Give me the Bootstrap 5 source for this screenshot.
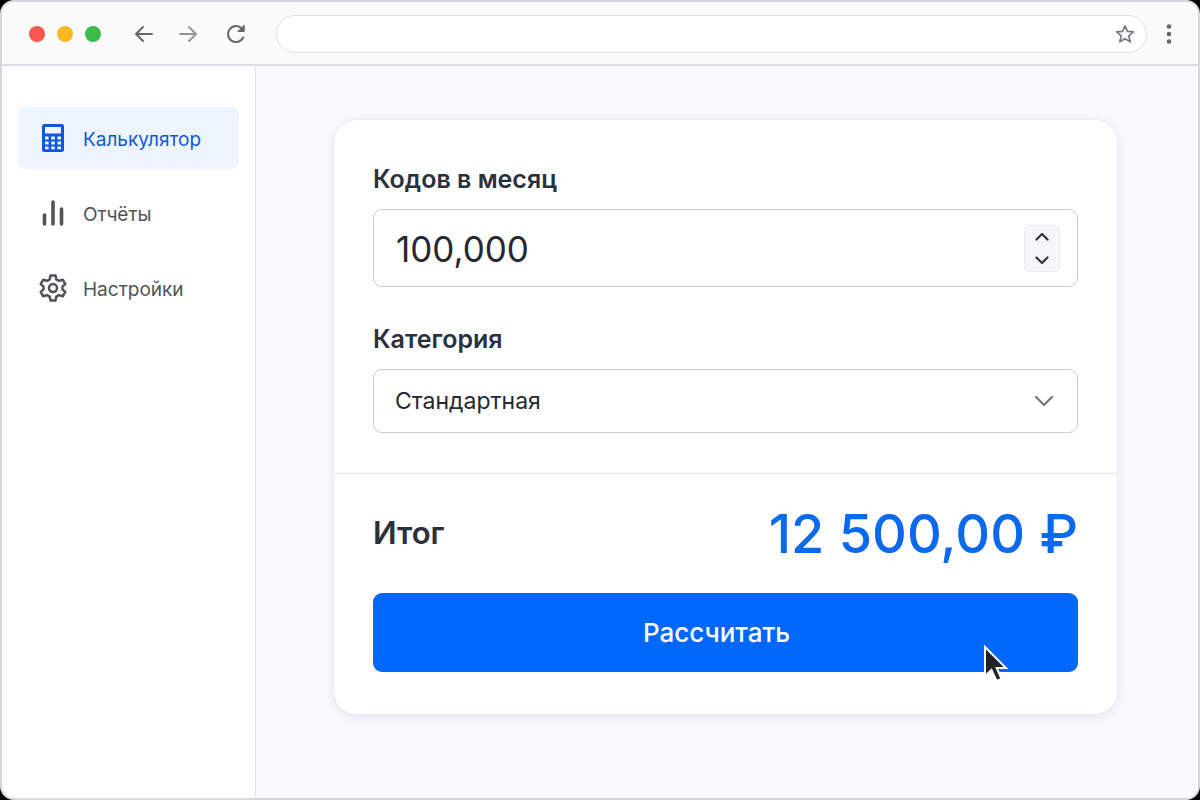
<!DOCTYPE html>
<html lang="ru">
<head>
<meta charset="utf-8">
<meta name="viewport" content="width=device-width, initial-scale=1">
<title>Калькулятор</title>
<link href="https://cdn.jsdelivr.net/npm/bootstrap@5.3.0/dist/css/bootstrap.min.css" rel="stylesheet">
<style>
  :root { --ink: #2b313c; --blue: #0067fd; }
  body { background: #000; color: var(--ink); font-family: Inter, "Open Sans", sans-serif; }
  .window { border: 2px solid #d6d8dd; border-radius: 14px; background: #fefefe; }
  .toolbar { height: 64px; background: #fafafb; border-bottom: 2px solid #dcdee4; padding: 2px 23px 0 27px; }
  .lights { gap: 12px; margin-right: 33px; }
  .light { width: 16px; height: 16px; border-radius: 50%; }
  .tools { gap: 24px; margin-right: 30px; }
  .tool { border: 0; background: none; padding: 0; line-height: 0; color: #66676c; }
  .tool.faded { color: #949599; }
  .address { border: 1px solid #e1e2e5; border-radius: 19px; height: 38px; background: #fff; padding-right: 11px; }
  .address input { border: 0; outline: 0; background: none; min-width: 0; padding: 0 16px; }
  .side { width: 254px; padding: 41px 16px; border-right: 1px solid #dfe1e8; gap: 13px; }
  .side .nav-link { height: 62px; padding: 4px 21px 0; gap: 16px; border-radius: 8px; font-size: 19px; color: #50535a; }
  .side .nav-link.active { background: #edf4fe; color: #1158d8; }
  .side svg { margin-bottom: 4px; }
  .stage { background: #f7f9fe; padding: 53px 80px 54px 77px; }
  .panel { background: #fefefe; border: 1px solid #eceef3; border-radius: 24px; box-shadow: 0 2px 10px rgba(40, 50, 80, .09); }
  .fields { padding: 41px 39px 40px; border-bottom: 1px solid #dfe2e8; }
  .result { padding: 0 39px 42px; }
  .caption { font-size: 25px; line-height: 36px; margin-bottom: 12px; font-weight: 600; display: block; }
  .field { border: 1px solid #c9cdd8; border-radius: 9px; background: #fefefe; }
  .amount { height: 78px; padding: 0 17px 0 22px; margin-bottom: 34px; }
  .amount input { border: 0; outline: 0; background: none; padding: 2px 0 0; min-width: 0; font-size: 35px; color: #25282f; }
  .stepper { width: 36px; height: 47px; padding: 6px 0; background: #f4f6f9; border: 1px solid #e9ebef; border-radius: 5px; }
  .stepper button { border: 0; background: none; padding: 0; line-height: 0; color: #33363e; }
  .choice { height: 64px; padding: 0 21px; font-size: 23px; line-height: 32px; color: #25282f; appearance: none; }
  .choice-mark { position: absolute; right: 24px; top: 26px; pointer-events: none; }
  .sum { height: 119px; }
  .sum-label { font-size: 31px; font-weight: 600; }
  .sum-value { font-size: 54px; font-weight: 500; color: #0b69ee; white-space: nowrap; }
  .go { height: 79px; padding: 0 18px 0 0; border: 0; border-radius: 9px; background: var(--blue); color: #fff; font-size: 26px; font-weight: 500; }
  .go:hover { background: var(--blue); color: #fff; }
  .pointer { position: absolute; right: 69px; bottom: -12px; pointer-events: none; }
</style>
</head>
<body>
<div class="window d-flex flex-column min-vh-100 overflow-hidden">
  <header class="toolbar d-flex align-items-center flex-shrink-0">
    <div class="lights d-flex">
      <span class="light" style="background:#fb5650"></span>
      <span class="light" style="background:#fbb724"></span>
      <span class="light" style="background:#3cbb4b"></span>
    </div>
    <div class="tools d-flex align-items-center">
      <button class="tool" type="button" aria-label="Назад"><svg width="20" height="20" viewBox="0 0 20 20" fill="none" stroke="currentColor" stroke-width="2" stroke-linecap="round" stroke-linejoin="round"><path d="M18 10H2M9 3l-7 7 7 7"/></svg></button>
      <button class="tool faded" type="button" aria-label="Вперёд"><svg width="20" height="20" viewBox="0 0 20 20" fill="none" stroke="currentColor" stroke-width="2" stroke-linecap="round" stroke-linejoin="round"><path d="M2 10h16M11 3l7 7-7 7"/></svg></button>
      <button class="tool ms-1" type="button" aria-label="Обновить"><svg width="20" height="20" viewBox="0 0 20 20" fill="none" stroke="currentColor" stroke-width="2" stroke-linecap="round"><path d="M17.300 13.500A8 8 0 1 1 16 4.700"/><path d="M18.200 1.500v6h-6z" fill="currentColor" stroke-width="1" stroke-linejoin="round"/></svg></button>
    </div>
    <div class="address d-flex align-items-center flex-grow-1">
      <input class="flex-grow-1" type="text" aria-label="Адрес">
      <button class="tool" type="button" aria-label="В избранное"><svg width="20" height="20" viewBox="0 0 20 20" fill="none" stroke="#77787d" stroke-width="1.700" stroke-linejoin="round"><path d="M10 1.800l2.400 5.600 6 .5-4.600 4 1.400 5.900-5.200-3.100-5.200 3.100 1.400-5.900-4.600-4 6-.5z"/></svg></button>
    </div>
    <button class="tool ms-3" type="button" aria-label="Меню"><svg width="12" height="22" viewBox="0 0 12 22" fill="currentColor"><circle cx="6" cy="3.500" r="2.300"/><circle cx="6" cy="11" r="2.300"/><circle cx="6" cy="18.500" r="2.300"/></svg></button>
  </header>
  <div class="d-flex flex-grow-1">
    <nav class="side nav flex-column flex-nowrap flex-shrink-0">
      <a class="nav-link active d-flex align-items-center" href="#"><svg width="28" height="30" viewBox="0 0 28 30"><rect x="3" y="1" width="22" height="28" rx="2.500" fill="#1158d8"/><path fill="#edf4fe" d="M6 4h16v6.500H6zM6 13.500h3.600v3H6zm6.200 0h3.600v3h-3.600zm6.200 0H22v3h-3.600zM6 18.500h3.600v3H6zm6.200 0h3.600v3h-3.600zm6.200 0H22v3h-3.600zM6 23.500h3.600v2.800H6zm6.200 0h3.600v2.800h-3.600zm6.200 0H22v2.800h-3.600z"/></svg>Калькулятор</a>
      <a class="nav-link d-flex align-items-center" href="#"><svg width="28" height="30" viewBox="0 0 28 30" stroke="currentColor" stroke-width="3.600" stroke-linecap="round"><path d="M5.500 17v9M14 4v22M22.500 11v15"/></svg>Отчёты</a>
      <a class="nav-link d-flex align-items-center" href="#"><svg width="28" height="30" viewBox="0 0 28 30" fill="none" stroke="currentColor" stroke-width="2.500" stroke-linejoin="round"><path d="M11.500 2.500h5l.8 3.900 2.700 1.500 3.700-1.200 2.600 4.400-2.900 2.500v2.800l2.900 2.500-2.600 4.400-3.700-1.200-2.700 1.500-.8 3.900h-5l-.8-3.900L8 22.100l-3.700 1.200-2.600-4.400 2.900-2.500v-2.800l-2.900-2.500 2.600-4.400L8 7.900l2.700-1.500z"/><circle cx="14" cy="15" r="4"/></svg>Настройки</a>
    </nav>
    <main class="stage flex-grow-1">
      <form class="panel">
        <div class="fields">
          <label class="caption" for="codes">Кодов в месяц</label>
          <div class="field amount d-flex align-items-center">
            <input id="codes" class="flex-grow-1" type="text" inputmode="numeric" value="100,000">
            <div class="stepper d-flex flex-column align-items-center justify-content-between">
              <button type="button" aria-label="Больше"><svg width="14" height="9" viewBox="0 0 14 9" fill="none" stroke="currentColor" stroke-width="2.200" stroke-linecap="round" stroke-linejoin="round"><path d="M1.500 7.500L7 2l5.500 5.500"/></svg></button>
              <button type="button" aria-label="Меньше"><svg width="14" height="9" viewBox="0 0 14 9" fill="none" stroke="currentColor" stroke-width="2.200" stroke-linecap="round" stroke-linejoin="round"><path d="M1.500 1.500L7 7l5.500-5.500"/></svg></button>
            </div>
          </div>
          <label class="caption" for="category">Категория</label>
          <div class="position-relative">
            <select id="category" class="field choice w-100"><option>Стандартная</option></select>
            <svg class="choice-mark" width="20" height="12" viewBox="0 0 20 12" fill="none" stroke="#74767f" stroke-width="2.200" stroke-linecap="round" stroke-linejoin="round"><path d="M2 2l8 8 8-8"/></svg>
          </div>
        </div>
        <div class="result">
          <div class="sum d-flex align-items-center justify-content-between">
            <span class="sum-label">Итог</span>
            <output class="sum-value">12 500,00 ₽</output>
          </div>
          <div class="position-relative">
            <button class="btn go w-100" type="button">Рассчитать</button>
            <svg class="pointer" width="26" height="40" viewBox="0 0 26 40"><path d="M2 3v29l6.500-6 5 11 5-2.200-4.800-10.800H23z" fill="#222326" stroke="#fff" stroke-width="2" stroke-linejoin="miter"/></svg>
          </div>
        </div>
      </form>
    </main>
  </div>
</div>
<script src="https://cdn.jsdelivr.net/npm/bootstrap@5.3.0/dist/js/bootstrap.bundle.min.js"></script>
</body>
</html>
